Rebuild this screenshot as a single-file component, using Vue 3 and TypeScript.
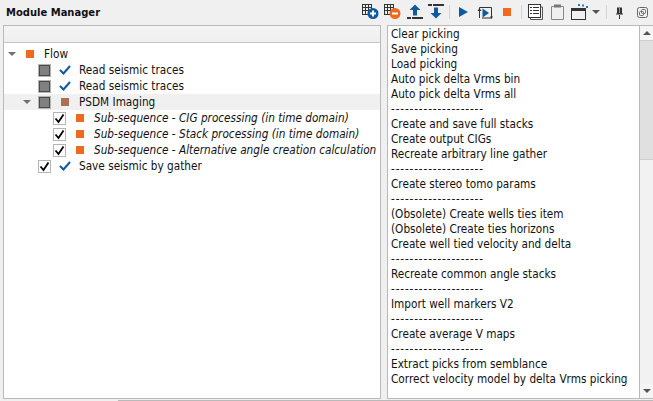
<script setup lang="ts">
interface Row { label: string; kind: 'sq' | 'check'; color?: string; state: 'gray' | 'on' | 'none'; indent: number; arrow?: boolean; italic?: boolean; hl?: boolean }
const rows: Row[] = [
  { label: 'Flow', kind: 'sq', color: '#ed6a1f', state: 'none', indent: 0, arrow: true },
  { label: 'Read seismic traces', kind: 'check', state: 'gray', indent: 1 },
  { label: 'Read seismic traces', kind: 'check', state: 'gray', indent: 1 },
  { label: 'PSDM Imaging', kind: 'sq', color: '#a9705a', state: 'gray', indent: 1, arrow: true, hl: true },
  { label: 'Sub-sequence - CIG processing (in time domain)', kind: 'sq', color: '#ed6a1f', state: 'on', indent: 2, italic: true },
  { label: 'Sub-sequence - Stack processing (in time domain)', kind: 'sq', color: '#ed6a1f', state: 'on', indent: 2, italic: true },
  { label: 'Sub-sequence - Alternative angle creation calculation', kind: 'sq', color: '#ed6a1f', state: 'on', indent: 2, italic: true },
  { label: 'Save seismic by gather', kind: 'check', state: 'on', indent: 1 },
]
const lines = [
  'Clear picking', 'Save picking', 'Load picking', 'Auto pick delta Vrms bin', 'Auto pick delta Vrms all',
  '--------------------', 'Create and save full stacks', 'Create output CIGs', 'Recreate arbitrary line gather',
  '--------------------', 'Create stereo tomo params', '--------------------', '(Obsolete) Create wells ties item',
  '(Obsolete) Create ties horizons', 'Create well tied velocity and delta', '--------------------',
  'Recreate common angle stacks', '--------------------', 'Import well markers V2', '--------------------',
  'Create average V maps', '--------------------', 'Extract picks from semblance', 'Correct velocity model by delta Vrms picking',
]
</script>

<template>
  <div class="page">
    <header class="titlebar">
      <h1 class="title">Module Manager</h1>
      <div class="tools">
        <svg class="i1" width="17" height="15" viewBox="0 0 17 15"><g fill="none" stroke="#333" stroke-width="1"><rect x="0.5" y="0.5" width="9" height="10" /><path d="M3.500 1v9M6.500 1v9M1 3.500h8M1 6.500h8" /></g><circle cx="11" cy="9.500" r="5.500" fill="#0f5a9c" /><circle cx="11" cy="9.500" r="3.500" fill="#fff" fill-opacity="0" /><path d="M8 9.500h6M11 6.500v6" stroke="#fff" stroke-width="2" /></svg>
        <svg class="i2" width="17" height="15" viewBox="0 0 17 15"><g fill="none" stroke="#333" stroke-width="1"><rect x="0.5" y="0.5" width="9" height="10" /><path d="M3.500 1v9M6.500 1v9M1 3.500h8M1 6.500h8" /></g><circle cx="11" cy="9.500" r="5.500" fill="#ed6a1f" /><path d="M8 9.500h6" stroke="#fff" stroke-width="2" /></svg>
        <svg class="i3" width="16" height="15" viewBox="0 0 16 15"><path d="M8 0.500l5.500 5.500H10v5.500H6V6H2.500z" fill="#0f5a9c" /><path d="M0 13h4v2H0zM5 13h11v2H5z" fill="#333" /></svg>
        <svg class="i4" width="16" height="15" viewBox="0 0 16 15"><path d="M0 0h4v2H0zM5 0h11v2H5z" fill="#333" /><path d="M6 3.500h4V9h3.500L8 14.500 2.500 9H6z" fill="#0f5a9c" /></svg>
        <span class="sep s1"></span>
        <svg class="i5" width="9" height="10" viewBox="0 0 9 10"><path d="M0 0l9 5-9 5z" fill="#0f5a9c" /></svg>
        <svg class="i6" width="16" height="12" viewBox="0 0 16 12"><path d="M2.500 11V0.500h12V11H5" fill="none" stroke="#333" /><path d="M5.500 1.500l6.500 4.500-6.500 4.500z" fill="#0f5a9c" /><path d="M0.500 4L2.500 1l2 3z" fill="#333" /><path d="M13 9.500h3L14.500 12z" fill="#333" /></svg>
        <span class="stop"></span>
        <span class="sep s2"></span>
        <svg class="i8" width="15" height="16" viewBox="0 0 15 16"><path d="M2.500 13.500v2h12V3h-2" fill="none" stroke="#555" /><rect x="0.500" y="0.500" width="12" height="13" fill="#fff" stroke="#333" /><path d="M2 3.500h2M5 3.500h6M2 6.500h2M5 6.500h6M2 9.500h2M5 9.500h6" stroke="#333" /></svg>
        <svg class="i9" width="13" height="16" viewBox="0 0 13 16"><path d="M3 2.500H0.500v13h12v-13H10" fill="none" stroke="#888" /><rect x="3" y="0.500" width="7" height="3" fill="#777" /></svg>
        <svg class="i10" width="19" height="16" viewBox="0 0 19 16"><rect x="0.500" y="4.500" width="14" height="11" fill="none" stroke="#333" /><rect x="0" y="4" width="15" height="3" fill="#333" /><path d="M7 0h2v2H7zM11 0.500h2v2h-2zM15 2h2v2h-2z" fill="#2c78bd" /></svg>
        <span class="caret"></span>
        <span class="sep s3"></span>
        <svg class="i11" width="7" height="12" viewBox="0 0 7 12"><path d="M1 0.500h5v6h1v1H0v-1h1z" fill="#333" /><path d="M3 8h1v4H3z" fill="#333" /><path d="M3 1h1v5H3z" fill="#999" /></svg>
        <svg class="i12" width="11" height="11" viewBox="0 0 11 11" fill="none" stroke="#666"><rect x="0.500" y="0.500" width="10" height="10" rx="2" /><rect x="4.500" y="2.500" width="4" height="4" rx="1" /><rect x="2.500" y="4.500" width="4" height="4" rx="1" /></svg>
      </div>
    </header>

    <main class="body">
      <section class="tree">
        <div class="treehead"></div>
        <ul class="rows">
          <li v-for="(r, i) in rows" :key="i" class="row" :class="[`lvl${r.indent}`, { hl: r.hl }]">
            <span class="arrow" :class="{ show: r.arrow }"></span>
            <span v-if="r.state !== 'none'" class="box">
              <span v-if="r.state === 'gray'" class="fill"></span>
              <svg v-else width="11" height="11" viewBox="0 0 11 11"><path d="M1.500 5.500l3 3.500 5-7.500" fill="none" stroke="#000" stroke-width="1.800" /></svg>
            </span>
            <span class="mark">
              <span v-if="r.kind === 'sq'" class="sq" :style="{ background: r.color }"></span>
              <svg v-else width="12" height="10" viewBox="0 0 12 10"><path d="M1 5l3.500 3.500L11 1" fill="none" stroke="#0f5a9c" stroke-width="2" /></svg>
            </span>
            <span class="label" :class="{ it: r.italic }">{{ r.label }}</span>
          </li>
        </ul>
      </section>

      <section class="list">
        <div class="text">
          <div v-for="(l, i) in lines" :key="i" class="line" :class="{ dash: l.startsWith('--') }">{{ l }}</div>
        </div>
        <div class="scroll">
          <div class="btn"><span class="up"></span></div>
          <div class="thumb"></div>
          <div class="track"></div>
          <div class="btn"><span class="down"></span></div>
        </div>
      </section>
    </main>
    <div class="foot"></div>
  </div>
</template>

<style>
html, body { margin: 0; background: #f0f0f0; overflow: hidden; }
</style>

<style scoped>
.page { width: 653px; height: 401px; background: #f0f0f0; display: flex; flex-direction: column; font-family: "DejaVu Sans Condensed", "DejaVu Sans", sans-serif; font-size: 11.7px; color: #000; overflow: hidden; }
.titlebar { height: 25px; flex: none; display: flex; align-items: flex-start; position: relative; }
.title { margin: 5px 0 0 6px; font-size: 11.1px; font-weight: bold; line-height: 15px; color: #111; }
.tools { position: absolute; left: 362px; top: 4px; display: flex; align-items: flex-start; }
.tools svg, .tools span { flex: none; display: block; }
.i2 { margin-left: 5px; }
.i3 { margin-left: 6px; }
.i4 { margin-left: 5px; }
.sep { width: 1px; height: 14px; background: #d4d4d4; margin-top: 1px; }
.s1 { margin-left: 5px; }
.i5 { margin-left: 9px; margin-top: 3px; }
.i6 { margin-left: 9px; margin-top: 3px; }
.stop { width: 8px; height: 8px; margin-left: 10px; margin-top: 4px; background: #ed6a1f; }
.s2 { margin-left: 10px; }
.i8 { margin-left: 6px; }
.i9 { margin-left: 8px; }
.i10 { margin-left: 7px; }
.caret { margin-left: 2px; margin-top: 6px; width: 0; height: 0; border: 4px solid transparent; border-top: 4px solid #555; border-bottom: 0; }
.s3 { margin-left: 6px; }
.i11 { margin-left: 9px; margin-top: 3px; }
.i12 { margin-left: 14px; margin-top: 3px; }
.body { display: flex; gap: 6px; height: 374px; flex: none; padding-left: 3px; }
.tree { width: 378px; flex: none; box-sizing: border-box; background: #fff; border: 1px solid #b9b9b9; border-top: 0; display: flex; flex-direction: column; }
.treehead { height: 18px; flex: none; background: linear-gradient(#f4f4f4, #efefef); border-top: 1px solid #b9b9b9; border-bottom: 1px solid #c8c8c8; box-sizing: border-box; }
.rows { list-style: none; margin: 3px 0 0; padding: 0; }
.row { height: 16px; display: flex; align-items: center; padding-left: 4px; white-space: nowrap; }
.row.hl { background: #f0f0f0; }
.arrow { width: 8px; flex: none; height: 0; border: 4px solid transparent; border-bottom: 0; box-sizing: border-box; visibility: hidden; }
.arrow.show { visibility: visible; border-top-color: #707070; border-top-width: 4px; }
.lvl0 .mark { margin-left: 8px; }
.lvl0 .label { margin-left: 8px; }
.lvl1 { padding-left: 4px; }
.lvl1.hl { padding-left: 19px; }
.lvl1:not(.hl) .box { margin-left: 22px; }
.lvl1.hl .box { margin-left: 7px; }
.lvl2 .box { margin-left: 37px; }
.box { width: 13px; height: 13px; flex: none; box-sizing: border-box; border: 1px solid #b4b4b4; background: #fff; display: flex; align-items: center; justify-content: center; }
.fill { width: 11px; height: 11px; background: #808080; border: 1px solid #4a4a4a; box-sizing: border-box; }
.mark { width: 12px; flex: none; display: flex; align-items: center; justify-content: center; margin-left: 8px; }
.mark svg { display: block; }
.sq { width: 8px; height: 8px; display: block; }
.label { margin-left: 8px; color: #111; line-height: 16px; }
.lvl2 .label { margin-left: 8px; }
.it { font-style: italic; }
.list { flex: 1; min-width: 0; display: flex; background: #fff; border: 1px solid #b9b9b9; border-right: 0; box-sizing: border-box; }
.text { flex: 1; padding: 1px 0 0 3px; min-width: 0; }
.line { height: 15px; line-height: 15px; white-space: nowrap; color: #111; }
.dash { letter-spacing: 0.85px; }
.scroll { width: 13px; flex: none; border-left: 1px solid #b9b9b9; display: flex; flex-direction: column; }
.btn { height: 14px; flex: none; display: flex; align-items: center; justify-content: center; background: #f5f5f5; }
.up, .down { width: 0; height: 0; border: 4px solid transparent; }
.up { border-top: 0; border-bottom-color: #555; }
.down { border-bottom: 0; border-top-color: #555; }
.thumb { height: 120px; flex: none; background: #e0e0e0; border-top: 1px solid #d0d0d0; border-bottom: 1px solid #d0d0d0; box-sizing: border-box; }
.track { flex: 1; background: #f2f2f2; }
.foot { height: 1px; margin: 1px 0 0 118px; background: #b9b9b9; flex: none; }
</style>
